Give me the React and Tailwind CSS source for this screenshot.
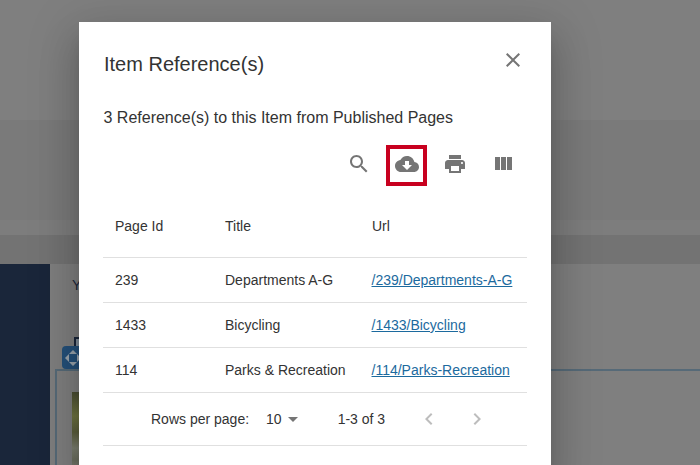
import React from 'react';

const ROWS = [
  { id: '239', title: 'Departments A-G', url: '/239/Departments-A-G' },
  { id: '1433', title: 'Bicycling', url: '/1433/Bicycling' },
  { id: '114', title: 'Parks & Recreation', url: '/114/Parks-Recreation' },
];

const Icon = ({ d, className = 'text-[#757575]', size = 24 }) => (
  <svg width={size} height={size} viewBox="0 0 24 24" fill="currentColor" className={className}>
    <path d={d} />
  </svg>
);

const ToolButton = ({ d, boxed }) => (
  <div className="relative w-12 h-12 flex items-center justify-center">
    <Icon d={d} />
    {boxed && <div className="absolute left-[3px] top-[5px] w-[41px] h-[41px] border-4 border-[#c8001f]" />}
  </div>
);

export default function App() {
  return (
    <div className="relative w-[700px] h-[465px] overflow-hidden bg-[#7f7f7f] font-['Liberation_Sans',Arial,sans-serif]">
      {/* page behind the dialog */}
      <div className="h-[120px] bg-[#7f7f7f]" />
      <div className="h-[100px] bg-[#7a7a7a]" />
      <div className="h-[15px] bg-[#7d7d7d]" />
      <div className="h-[29px] bg-[#737373]" />
      <div className="flex h-[201px]">
        <div className="w-[50px] bg-[#1a263a]" />
        <div className="flex-1 pl-[5px]">
          <div className="h-[105px] pl-[17px] pt-[11px] text-sm text-[#1a263a]">Y</div>
          <div className="h-full border-t-2 border-l-2 border-[#566a78] pl-[15px] pt-[21px]">
            <div className="w-[20px] h-[80px] bg-[linear-gradient(180deg,#4a4d33_0%,#6f7440_30%,#5c5f3c_50%,#7c7f70_70%,#6d7060_85%,#85857f_100%)]" />
          </div>
        </div>
      </div>
      {/* block handle peeking out from under the dialog */}
      <div className="absolute left-[74px] top-[337px] w-[12px] h-[10px] border-2 border-b-0 border-[#1a263a] bg-[#7f8c98]" />
      <div className="absolute left-[62px] top-[346px] w-[24px] h-[23px] rounded flex items-center pl-[3px] bg-[#24507a]">
        <svg width="16" height="16" viewBox="0 0 16 16">
          <path d="M8 0l8 8-8 8-8-8z" fill="#9aa5ad" />
          <rect x="4" y="4" width="8" height="8" fill="#24507a" />
        </svg>
      </div>

      {/* dialog */}
      <div className="absolute left-[79px] top-[22px] w-[472px] h-[460px] bg-white shadow-[0_11px_15px_-7px_rgba(0,0,0,0.2),0_24px_38px_3px_rgba(0,0,0,0.14),0_9px_46px_8px_rgba(0,0,0,0.12)]">
        <div className="flex justify-between pl-[25px] pr-[26px] pt-[26px]">
          <h2 className="text-[20px] leading-[32px] text-[#333333]">Item Reference(s)</h2>
          <div>
            <Icon d="M19 6.41L17.59 5 12 10.59 6.41 5 5 6.41 10.59 12 5 17.59 6.41 19 12 13.41 17.59 19 19 17.59 13.41 12z" />
          </div>
        </div>
        <p className="ml-[24.5px] mt-[26px] text-base leading-6 text-[#333333]">3 Reference(s) to this Item from Published Pages</p>

        <div className="flex justify-end pr-[24px] mt-[10px]">
          <ToolButton d="M15.5 14h-.79l-.28-.27C15.41 12.59 16 11.11 16 9.5 16 5.91 13.09 3 9.5 3S3 5.91 3 9.5 5.91 16 9.5 16c1.61 0 3.09-.59 4.23-1.57l.27.28v.79l5 4.99L20.49 19l-4.99-5zm-6 0C7.01 14 5 11.99 5 9.5S7.01 5 9.5 5 14 7.01 14 9.5 11.99 14 9.5 14z" />
          <ToolButton boxed d="M19.35 10.04C18.67 6.59 15.64 4 12 4 9.11 4 6.6 5.64 5.35 8.04 2.34 8.36 0 10.91 0 14c0 3.31 2.69 6 6 6h13c2.76 0 5-2.24 5-5 0-2.64-2.05-4.78-4.65-4.96zM17 13l-5 5-5-5h3V9h4v4h3z" />
          <ToolButton d="M19 8H5c-1.66 0-3 1.34-3 3v6h4v4h12v-4h4v-6c0-1.66-1.34-3-3-3zm-3 11H8v-5h8v5zm3-7c-.55 0-1-.45-1-1s.45-1 1-1 1 .45 1 1-.45 1-1 1zm-1-9H6v4h12V3z" />
          <ToolButton d="M10 18h5V5h-5v13zm-6 0h5V5H4v13zM16 5v13h5V5h-5z" />
        </div>

        <div className="mx-[24px] mt-[8px] text-sm text-[#333333]">
          <div className="grid grid-cols-[110px_147px_167px] h-[62px] items-center border-b border-[#e0e0e0] pb-[2px]">
            <div className="pl-3">Page Id</div>
            <div className="pl-3">Title</div>
            <div className="pl-3">Url</div>
          </div>
          {ROWS.map((r) => (
            <div key={r.id} className="grid grid-cols-[110px_147px_167px] h-[45px] items-center border-b border-[#e0e0e0]">
              <div className="pl-3">{r.id}</div>
              <div className="pl-3">{r.title}</div>
              <div className="pl-[11.5px] whitespace-nowrap">
                <a href="#" className="text-[#1c6a9e] underline">{r.url}</a>
              </div>
            </div>
          ))}
          <div className="flex items-center h-[53px] border-b border-[#e0e0e0] pl-[48px]">
            <span>Rows per page:</span>
            <span className="ml-[17px]">10</span>
            <Icon d="M7 10l5 5 5-5z" className="text-[#757575] ml-[-1px]" size={24} />
            <span className="ml-[33px]">1-3 of 3</span>
            <div className="ml-[32px] flex gap-[24px]">
              <Icon d="M15.41 7.41L14 6l-6 6 6 6 1.41-1.41L10.83 12z" className="text-[#bdbdbd]" />
              <Icon d="M10 6L8.59 7.41 13.17 12l-4.58 4.59L10 18l6-6z" className="text-[#bdbdbd]" />
            </div>
          </div>
        </div>
      </div>
    </div>
  );
}
